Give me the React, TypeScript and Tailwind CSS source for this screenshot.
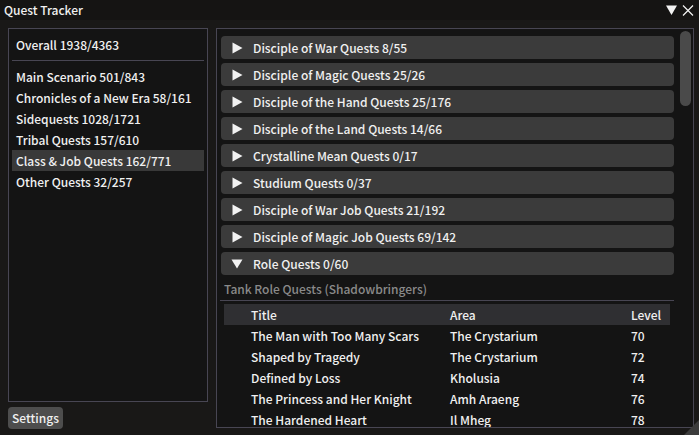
import React from "react";

const font = { fontFamily: '"Noto Sans CJK JP", "Noto Sans", sans-serif' };

const leftItems = [
  "Main Scenario 501/843",
  "Chronicles of a New Era 58/161",
  "Sidequests 1028/1721",
  "Tribal Quests 157/610",
  "Class & Job Quests 162/771",
  "Other Quests 32/257",
];

const headers = [
  "Disciple of War Quests 8/55",
  "Disciple of Magic Quests 25/26",
  "Disciple of the Hand Quests 25/176",
  "Disciple of the Land Quests 14/66",
  "Crystalline Mean Quests 0/17",
  "Studium Quests 0/37",
  "Disciple of War Job Quests 21/192",
  "Disciple of Magic Job Quests 69/142",
];

const rows = [
  ["The Man with Too Many Scars", "The Crystarium", "70"],
  ["Shaped by Tragedy", "The Crystarium", "72"],
  ["Defined by Loss", "Kholusia", "74"],
  ["The Princess and Her Knight", "Amh Araeng", "76"],
  ["The Hardened Heart", "Il Mheg", "78"],
];

function RightTri() {
  return (
    <svg width="11" height="12" viewBox="0 0 11 12" className="shrink-0">
      <polygon points="0.5,0.5 10.5,6 0.5,11.5" fill="#f2f2f2" />
    </svg>
  );
}

function DownTri() {
  return (
    <svg width="12" height="10" viewBox="0 0 12 10" className="shrink-0">
      <polygon points="0.5,0.5 11.5,0.5 6,9.5" fill="#f2f2f2" />
    </svg>
  );
}

export default function App() {
  return (
    <div
      className="relative w-[699px] h-[435px] overflow-hidden bg-[#191817] text-[#f0f0f0] text-[12px] font-medium whitespace-nowrap flex flex-col"
      style={font}
    >
      {/* title bar */}
      <div className="h-[20px] shrink-0 flex items-center pl-[4px] pr-[4px] bg-[#151413]">
        <span className="leading-none">Quest Tracker</span>
        <div className="ml-auto flex items-center gap-[5px] pr-[1px]">
          <svg width="11" height="10" viewBox="0 0 11 10">
            <polygon points="0,0.5 11,0.5 5.5,10" fill="#f2f2f2" />
          </svg>
          <svg width="12" height="11" viewBox="0 0 12 11">
            <path d="M1 0.5 L11 10.5 M11 0.5 L1 10.5" stroke="#f2f2f2" strokeWidth="1.2" />
          </svg>
        </div>
      </div>

      {/* body */}
      <div className="flex flex-1 min-h-0 pt-[8px] pl-[8px] gap-[8px]">
        {/* left column */}
        <div className="w-[200px] shrink-0 flex flex-col">
          <div className="h-[374px] shrink-0 border border-[#484653] bg-[#141414] px-[3px] pt-[5px]">
            <div className="h-[21px] flex items-center pl-[4px]">Overall 1938/4363</div>
            <div className="mt-[5px] h-px bg-[#484653]" />
            <div className="mt-[5px] flex flex-col">
              {leftItems.map((t, i) => (
                <div
                  key={t}
                  className={
                    "h-[21px] shrink-0 flex items-center pl-[4px] " +
                    (i === 4 ? "bg-[#393939]" : "")
                  }
                >
                  {t}
                </div>
              ))}
            </div>
          </div>
          <div className="mt-[5px] shrink-0 w-[55px] h-[22px] rounded-[4px] bg-[#4d4d4d] flex items-center justify-center">
            Settings
          </div>
        </div>

        {/* right panel */}
        <div className="w-[478px] h-[400px] shrink-0 border border-[#484653] bg-[#141414] flex overflow-hidden">
          <div className="w-[457px] shrink-0 pl-[4px] pt-[7px] flex flex-col">
            <div className="flex flex-col shrink-0 gap-[4px]">
              {headers.map((h) => (
                <div
                  key={h}
                  className="h-[23px] shrink-0 rounded-[4px] bg-[#3b3b3b] flex items-center pl-[11px] gap-[10px]"
                >
                  <RightTri />
                  <span>{h}</span>
                </div>
              ))}
              <div className="h-[23px] shrink-0 rounded-[4px] bg-[#3b3b3b] flex items-center pl-[10px] gap-[10px]">
                <DownTri />
                <span>Role Quests 0/60</span>
              </div>
            </div>
            <div className="h-[25px] shrink-0 flex items-center pl-[3px] text-[#8a8a8a] pt-[2px]">
              Tank Role Quests (Shadowbringers)
            </div>
            <div className="h-px shrink-0 bg-[#484653] -ml-[1px]" />
            <div className="mt-[3px] ml-[3px] w-[446px] shrink-0 flex flex-col">
              <div className="h-[21px] shrink-0 bg-[#2f2f32] flex items-center pl-[27px]">
                <span className="w-[199px]">Title</span>
                <span className="w-[181px]">Area</span>
                <span>Level</span>
              </div>
              {rows.map((r, i) => (
                <div key={i} className="h-[21px] shrink-0 flex items-center pl-[27px]">
                  <span className="w-[199px]">{r[0]}</span>
                  <span className="w-[181px]">{r[1]}</span>
                  <span>{r[2]}</span>
                </div>
              ))}
            </div>
          </div>
          <div className="ml-[6px] mt-[2px] w-[11px] h-[75px] shrink-0 rounded-full bg-[#4a4a4a]" />
        </div>
      </div>

      {/* resize grip */}
      <svg className="absolute right-0 bottom-0" width="16" height="16" viewBox="0 0 16 16">
        <polygon points="16,1 16,16 1,16" fill="#3c3c3c" />
      </svg>
    </div>
  );
}
